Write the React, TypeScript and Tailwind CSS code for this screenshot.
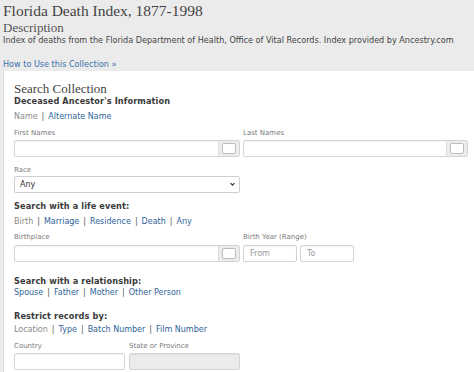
import React from "react";

const body = { fontFamily: '"DejaVu Sans", Verdana, sans-serif' };
const serif = { fontFamily: '"Liberation Serif", "Times New Roman", serif' };

const TextBox = ({ check = false, placeholder = "", disabled = false, w = "w-full" }: { check?: boolean; placeholder?: string; disabled?: boolean; w?: string }) => (
  <div
    className={`${w} h-[17px] flex border border-[#d4d4d4] rounded-[2px] shadow-[inset_0_1px_1px_rgba(0,0,0,0.05)] ${disabled ? "bg-[#ebebeb]" : "bg-white"}`}
  >
    <span className="flex-1 pl-[6px] text-[8px] leading-[15px] text-[#999]">{placeholder}</span>
    {check && (
      <div className="w-[21px] h-full bg-[#ececec] border-l border-[#dcdcdc] flex items-center justify-center">
        <span className="w-[14px] h-[11px] bg-white border border-[#bdbdbd] rounded-[2px]" />
      </div>
    )}
  </div>
);

const Label = ({ children, mt }: { children: React.ReactNode; mt: string }) => (
  <div className={`${mt} text-[7px] leading-[9px] text-[#7a7a7a]`}>{children}</div>
);

const Heading = ({ children, mt }: { children: React.ReactNode; mt: string }) => (
  <div className={`${mt} text-[8.2px] leading-[10px] font-bold text-[#3a3a3a] tracking-[0.1px]`}>{children}</div>
);

const Links = ({ items, mt, active = true }: { items: string[]; mt: string; active?: boolean }) => (
  <div className={`${mt} text-[8px] leading-[10px] flex`}>
    {items.map((it, i) => (
      <span key={it} className="flex">
        {i > 0 && <span className="text-[#555] px-[4px]">|</span>}
        <span className={active && i === 0 ? "text-[#8a8a8a]" : "text-[#2f639a]"}>{it}</span>
      </span>
    ))}
  </div>
);

export default function App() {
  return (
    <div className="w-[474px] h-[372px] overflow-hidden bg-[#ebebeb]" style={body}>
      <div className="pl-[3px] pt-[2px] pb-[2px]">
        <h1 className="text-[15.5px] leading-[18px] text-[#444]" style={serif}>
          Florida Death Index, 1877-1998
        </h1>
        <div className="text-[13px] leading-[15px] text-[#555]" style={serif}>
          Description
        </div>
        <p className="text-[8.1px] leading-[10px] text-[#444] whitespace-nowrap">
          Index of deaths from the Florida Department of Health, Office of Vital Records. Index provided by Ancestry.com
        </p>
        <a className="block mt-[14px] text-[8.1px] leading-[10px] text-[#3c73ac]">How to Use this Collection »</a>
      </div>

      <div className="ml-[3px] border-l border-[#dedede] bg-white h-full pl-[10px] pt-[10px]">
        <div className="text-[13px] leading-[15px] text-[#444]" style={serif}>
          Search Collection
        </div>
        <Heading mt="mt-0">Deceased Ancestor's Information</Heading>
        <Links mt="mt-[6px]" items={["Name", "Alternate Name"]} />

        <div className="grid grid-cols-[226px_225px] gap-x-[3px]">
          <div>
            <Label mt="mt-[7px]">First Names</Label>
            <div className="mt-[2px]"><TextBox check /></div>
          </div>
          <div>
            <Label mt="mt-[7px]">Last Names</Label>
            <div className="mt-[2px]"><TextBox check /></div>
          </div>
        </div>

        <Label mt="mt-[9px]">Race</Label>
        <div className="mt-[1px] w-[226px] h-[17px] border border-[#cfcfcf] rounded-[2px] bg-white flex items-center justify-between pl-[5px] pr-[3px]">
          <span className="text-[8px] text-[#333]">Any</span>
          <svg width="7" height="5" viewBox="0 0 7 5">
            <path d="M1.5 1.2l2 2 2-2" fill="none" stroke="#333" strokeWidth="1.2" />
          </svg>
        </div>

        <Heading mt="mt-[8px]">Search with a life event:</Heading>
        <Links mt="mt-[6px]" items={["Birth", "Marriage", "Residence", "Death", "Any"]} />

        <div className="grid grid-cols-[226px_225px] gap-x-[3px]">
          <div>
            <Label mt="mt-[6px]">Birthplace</Label>
            <div className="mt-[3px]"><TextBox check /></div>
          </div>
          <div>
            <Label mt="mt-[6px]">Birth Year (Range)</Label>
            <div className="mt-[3px] flex gap-[3px]">
              <TextBox w="w-[54px]" placeholder="From" />
              <TextBox w="w-[54px]" placeholder="To" />
            </div>
          </div>
        </div>

        <Heading mt="mt-[14px]">Search with a relationship:</Heading>
        <Links mt="mt-[2px]" active={false} items={["Spouse", "Father", "Mother", "Other Person"]} />

        <Heading mt="mt-[13px]">Restrict records by:</Heading>
        <Links mt="mt-[4px]" items={["Location", "Type", "Batch Number", "Film Number"]} />

        <div className="flex gap-[4px]">
          <div>
            <Label mt="mt-[7px]">Country</Label>
            <div className="mt-[2px]"><TextBox w="w-[111px]" /></div>
          </div>
          <div>
            <Label mt="mt-[7px]">State or Province</Label>
            <div className="mt-[2px]"><TextBox w="w-[111px]" disabled /></div>
          </div>
        </div>
      </div>
    </div>
  );
}
